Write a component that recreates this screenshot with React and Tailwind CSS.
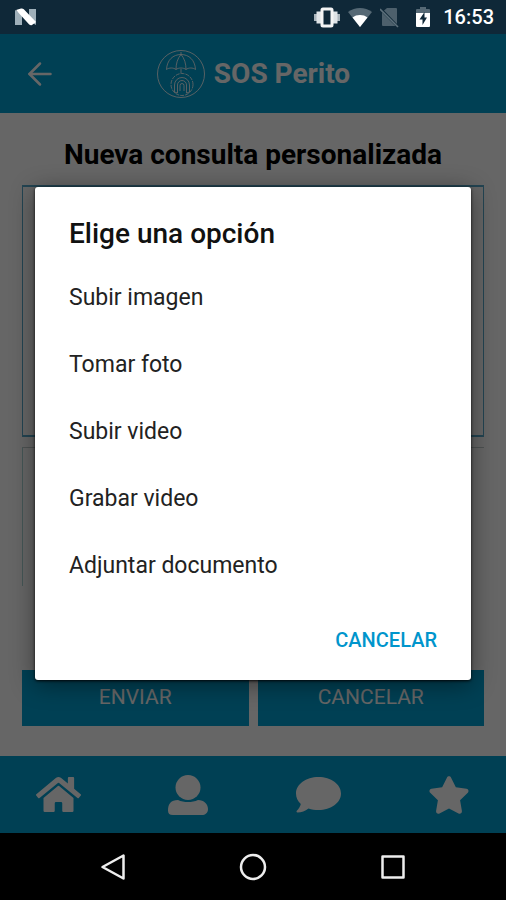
import React, { useState } from "react";
import { ArrowLeft } from "lucide-react";
import { FaHome, FaStar } from "react-icons/fa";

const OPTIONS = [
  "Subir imagen",
  "Tomar foto",
  "Subir video",
  "Grabar video",
  "Adjuntar documento",
];

const StatusBar = () => (
  <div className="h-[34px] shrink-0 bg-[#0f2838] px-3 flex items-center justify-between text-white">
    <svg className="w-7 h-6" viewBox="0 0 28 24" aria-hidden="true">
      <path d="M3 5l7 4v11H3z" fill="#9fb0ba" />
      <path d="M17 4h7v16l-7-4z" fill="#9fb0ba" />
      <path d="M4 5l5-1.500c1-.3 2 0 2.800.7L24 17l-4 3c-1 .4-2 .2-2.800-.5z" fill="#fff" />
    </svg>
    <div className="flex items-center gap-2">
      <svg className="w-[26px] h-6" viewBox="0 0 26 24" aria-hidden="true">
        <path d="M0 9h3v7H0zM23 9h3v7h-3z" fill="#aab5bc" />
        <path d="M2.500 6.500H7v12H2.500zM19 6.500h4.500v12H19z" fill="#dfe4e7" />
        <rect x="8" y="4" width="10" height="17" rx="1" fill="#0f2838" stroke="#f4f4f4" strokeWidth="3" />
      </svg>
      <svg className="w-6 h-6" viewBox="0 0 24 24" aria-hidden="true">
        <path d="M0 7C7 1.500 17 1.500 24 7L12 22z" fill="#566975" />
        <path d="M4.500 12.500c4-3.300 11-3.300 15 0L12 22z" fill="#fff" />
      </svg>
      <svg className="w-[19px] h-6" viewBox="0 0 19 24" aria-hidden="true">
        <path d="M7 3h9a1 1 0 0 1 1 1v15L4 5.500z" fill="#4d606c" />
        <path d="M2 7.500L15.500 21H3a1 1 0 0 1-1-1z" fill="#4d606c" />
        <path d="M0 4l18 18" stroke="#5d707b" strokeWidth="1.600" />
      </svg>
      <div className="flex items-center gap-3 pl-2">
        <svg className="w-4 h-6" viewBox="0 0 16 24" aria-hidden="true">
          <path d="M5 2h6v2h3a1 1 0 0 1 1 1v5H1V5a1 1 0 0 1 1-1h3z" fill="#566975" />
          <path d="M1 8h14v13a1 1 0 0 1-1 1H2a1 1 0 0 1-1-1z" fill="#fff" />
          <path d="M9.500 7L4.500 14.500h3V20l4.500-7.500H9.500z" fill="#0f2838" />
        </svg>
        <span className="text-[20px] leading-6 font-medium">16:53</span>
      </div>
    </div>
  </div>
);

const Logo = () => (
  <svg
    className="w-[50px] h-[50px]"
    viewBox="0 0 50 50"
    fill="none"
    stroke="currentColor"
    strokeWidth="1"
    strokeOpacity="0.85"
    aria-hidden="true"
  >
    <circle cx="25" cy="25" r="23.500" />
    <path d="M10.500 20.500C11 11 17 5.500 25 5.500s14 5.500 14.500 15c-2.500-2-7-2-9.500 0-2.500-2-7.500-2-10 0-2.500-2-7-2-9.500 0z" />
    <path d="M20 20.500c0-6 1.500-11 5-15 3.500 4 5 9 5 15M25 3v3M25 20v4" />
    <circle cx="26" cy="35.500" r="11" strokeDasharray="4 1" />
    <path d="M18.500 43v-7a7.500 7.500 0 0 1 15 0v7l-3 1v-8a4.500 4.500 0 0 0-9 0v8zM24 42v-5.500a2 2 0 0 1 4 0V42" />
  </svg>
);

const Header = () => (
  <header className="h-[79px] shrink-0 bg-[#00a0d2] px-[22px] grid grid-cols-[1fr_auto_1fr] items-center text-white">
    <button type="button" aria-label="Volver" className="justify-self-start">
      <ArrowLeft size={36} strokeWidth={1.7} />
    </button>
    <div className="flex items-center gap-2">
      <Logo />
      <span className="text-[28px] leading-8 font-bold">SOS Perito</span>
    </div>
  </header>
);

const Form = () => (
  <main className="flex-1 flex flex-col bg-white px-[22px] pt-6 pb-[30px]">
    <h1 className="text-[28px] leading-9 font-bold text-center text-black">
      Nueva consulta personalizada
    </h1>
    <textarea
      aria-label="Consulta"
      className="mt-3 h-[252px] w-full resize-none border-x border-y-2 border-[#58aacc] bg-white p-3 text-[22px]"
    />
    <div className="mt-2.5 h-[139px] border-t border-l border-t-[#c4cccc] border-l-[#acd8d8]" />
    <div className="mt-auto flex gap-[9px] text-[21px] text-white">
      <button type="button" className="flex-1 h-14 bg-[#00a0d2]">
        ENVIAR
      </button>
      <button type="button" className="flex-1 h-14 bg-[#00a0d2]">
        CANCELAR
      </button>
    </div>
  </main>
);

const TabBar = () => (
  <nav className="h-[77px] shrink-0 bg-[#00a0d2] px-9 flex items-center justify-between text-white">
    <a href="#inicio" aria-label="Inicio">
      <FaHome size={45} />
    </a>
    <a href="#perfil" aria-label="Perfil">
      <svg className="w-10 h-10" viewBox="0 0 40 40" fill="currentColor" aria-hidden="true">
        <circle cx="20" cy="12.500" r="12.500" />
        <path d="M10 25c6 2.700 14 2.700 20 0 6 0 10 4 10 9 0 4-3 6-6 6H5c-3.500 0-5-1.500-5-4.500C0 29 3 25 10 25z" />
      </svg>
    </a>
    <a href="#mensajes" aria-label="Mensajes">
      <svg className="w-[45px] h-9" viewBox="0 0 45 36" fill="currentColor" aria-hidden="true">
        <path d="M22.500 0C35 0 45 7.200 45 16.500S35 33 22.500 33c-3.500 0-7-.6-10-1.600-3.300 2.600-7 4.100-11 4.100-1 0-1.300-1-.7-1.700 2-2 3.500-4.300 4-6.800C1.700 24.200 0 20.500 0 16.500 0 7.200 10 0 22.500 0z" />
      </svg>
    </a>
    <a href="#favoritos" aria-label="Favoritos">
      <FaStar size={42} />
    </a>
  </nav>
);

const OptionsDialog = ({ onClose }) => (
  <div className="absolute inset-0 bg-black/60 px-[35px] flex items-center justify-center">
    <div
      role="dialog"
      aria-labelledby="dialog-title"
      className="w-full rounded-[3px] bg-white pt-[29px] pb-4 shadow-[0_4px_24px_rgba(0,0,0,0.45),0_1px_3px_rgba(0,0,0,0.9)]"
    >
      <h2 id="dialog-title" className="px-[34px] pb-[13px] text-[28px] leading-9 font-medium text-[#111]">
        Elige una opción
      </h2>
      <ul>
        {OPTIONS.map((option) => (
          <li key={option}>
            <button
              type="button"
              onClick={onClose}
              className="block w-full h-[67px] px-[34px] text-left text-[23px] text-[#222]"
            >
              {option}
            </button>
          </li>
        ))}
      </ul>
      <div className="mt-4 px-[34px] flex justify-end">
        <button type="button" onClick={onClose} className="h-12 text-[20px] font-medium text-[#0095cc]">
          CANCELAR
        </button>
      </div>
    </div>
  </div>
);

const SystemNav = () => (
  <div className="h-[67px] shrink-0 bg-black flex items-center justify-center gap-[112px] text-[#eee]">
    <button type="button" aria-label="Atrás">
      <svg className="w-7 h-7" viewBox="0 0 28 28" fill="none" stroke="currentColor" strokeWidth="2.500" strokeLinejoin="round">
        <path d="M24.500 2.500v23L3.500 14z" />
      </svg>
    </button>
    <button type="button" aria-label="Inicio del sistema">
      <svg className="w-7 h-7" viewBox="0 0 28 28" fill="none" stroke="currentColor" strokeWidth="2.500">
        <circle cx="14" cy="14" r="12" />
      </svg>
    </button>
    <button type="button" aria-label="Recientes">
      <svg className="w-7 h-7" viewBox="0 0 28 28" fill="none" stroke="currentColor" strokeWidth="2.500" strokeLinejoin="round">
        <rect x="3.500" y="3.500" width="21" height="21" />
      </svg>
    </button>
  </div>
);

const App = () => {
  const [open, setOpen] = useState(true);

  return (
    <div className="min-h-screen flex flex-col font-[Roboto,sans-serif]">
      <StatusBar />
      <div className="relative flex-1 flex flex-col">
        <Header />
        <Form />
        <TabBar />
        {open && <OptionsDialog onClose={() => setOpen(false)} />}
      </div>
      <SystemNav />
    </div>
  );
};

export default App;
